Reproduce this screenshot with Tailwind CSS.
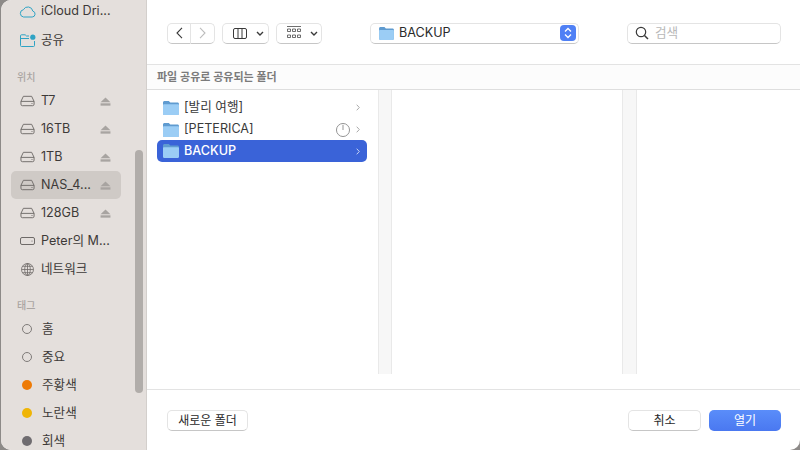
<!DOCTYPE html>
<html lang="ko">
<head>
  <meta charset="UTF-8">
  <title>Open panel</title>
  <script src="https://cdn.jsdelivr.net/npm/@tailwindcss/browser@4"></script>
</head>
<body class="w-[800px] h-[450px] overflow-hidden bg-[#8d8a88] font-['Inter','Liberation_Sans','Noto_Sans_CJK_KR',sans-serif] text-[12.6px] text-[#3d3a38]">
  <svg width="0" height="0" class="absolute">
    <defs>
      <symbol id="disk" viewBox="0 0 16 12"><path d="M3.6 1h8.8l2.6 5.4v3a1.600 1.600 0 0 1-1.600 1.600H2.600A1.600 1.600 0 0 1 1 9.400v-3z M1 6.400h14" fill="none" stroke="#6e6a68" stroke-width="1"/><circle cx="12.800" cy="8.700" r=".6" fill="#6e6a68"/></symbol>
      <symbol id="eject" viewBox="0 0 12 10"><path d="M6 .5 11.500 5.800H.5z" fill="#a8a4a1"/><rect x=".5" y="7" width="11" height="2.600" fill="#a8a4a1"/></symbol>
      <symbol id="folder" viewBox="0 0 16 14"><path d="M1.500 0h4.300l1.500 1.500h7.200c.8 0 1.500.7 1.500 1.500v9.500c0 .8-.7 1.500-1.500 1.500h-13C.7 14 0 13.300 0 12.500v-11C0 .7.7 0 1.500 0z" fill="#5f9bd0"/><path d="M1 3.300h14c.5 0 1 .4 1 1v8.200c0 .8-.7 1.500-1.500 1.500h-13C.7 14 0 13.300 0 12.500V4.300c0-.6.500-1 1-1z" fill="#9bcdf5"/></symbol>
    </defs>
  </svg>

  <div class="ml-[1px] w-[799px] h-[450px] flex bg-white rounded-tl-[10px] rounded-bl-[10px] rounded-br-[10px] overflow-hidden">
    <!-- Sidebar -->
    <aside class="relative w-[146px] shrink-0 h-full overflow-hidden bg-[#e4dfdc] border-r border-[#d3cfcc]">
      <div class="flex flex-col pl-[10px] w-[120px]">
        <div class="h-[28px] -mt-[3px] flex items-center pl-[8px] gap-[5px]">
          <svg class="w-[17px] h-[13px]" viewBox="0 0 17 13"><path d="M4.500 12h8.700a3 3 0 0 0 .6-5.900A5 5 0 0 0 4.400 4.700 3.700 3.700 0 0 0 4.500 12z" fill="none" stroke="#2fa3c4" stroke-width="1"/></svg>
          <span class="whitespace-nowrap">iCloud Dri...</span>
        </div>
        <div class="h-[28px] mt-[1px] flex items-center pl-[9px] gap-[5px]">
          <svg class="w-[16px] h-[13px]" viewBox="0 0 16 13"><path d="M9 2H6.500L5.200.8H1.500A1 1 0 0 0 .5 1.800v9.700a1 1 0 0 0 1 1h12a1 1 0 0 0 1-1V7M.5 4.500H9" fill="none" stroke="#2fa3c4" stroke-width="1"/><circle cx="12.800" cy="3.200" r="2.600" fill="#2fa3c4"/></svg>
          <span>공유</span>
        </div>
        <div class="h-[14px] mt-[16px] mb-[3px] pl-[6px] flex items-center text-[10px] font-medium text-[#aaa5a2]">위치</div>
        <div class="h-[28px] flex items-center pl-[9px]">
          <svg class="w-[15px] h-[12px] mr-[6px]"><use href="#disk"/></svg><span class="flex-1">T7</span><svg class="w-[11px] h-[9px] mr-[10px]"><use href="#eject"/></svg>
        </div>
        <div class="h-[28px] flex items-center pl-[9px]">
          <svg class="w-[15px] h-[12px] mr-[6px]"><use href="#disk"/></svg><span class="flex-1">16TB</span><svg class="w-[11px] h-[9px] mr-[10px]"><use href="#eject"/></svg>
        </div>
        <div class="h-[28px] flex items-center pl-[9px]">
          <svg class="w-[15px] h-[12px] mr-[6px]"><use href="#disk"/></svg><span class="flex-1">1TB</span><svg class="w-[11px] h-[9px] mr-[10px]"><use href="#eject"/></svg>
        </div>
        <div class="h-[28px] flex items-center pl-[9px] bg-[#cfcac6] rounded-[5px]">
          <svg class="w-[15px] h-[12px] mr-[6px]"><use href="#disk"/></svg><span class="flex-1">NAS_4...</span><svg class="w-[11px] h-[9px] mr-[10px]"><use href="#eject"/></svg>
        </div>
        <div class="h-[28px] flex items-center pl-[9px]">
          <svg class="w-[15px] h-[12px] mr-[6px]"><use href="#disk"/></svg><span class="flex-1">128GB</span><svg class="w-[11px] h-[9px] mr-[10px]"><use href="#eject"/></svg>
        </div>
        <div class="h-[28px] flex items-center pl-[9px]">
          <svg class="w-[15px] h-[8px] mr-[6px]" viewBox="0 0 15 8"><rect x=".5" y=".5" width="14" height="7" rx="1.500" fill="none" stroke="#6e6a68"/><circle cx="12" cy="4" r=".6" fill="#6e6a68"/></svg><span class="whitespace-nowrap">Peter의 M...</span>
        </div>
        <div class="h-[28px] flex items-center pl-[10px]">
          <svg class="w-[13px] h-[13px] mr-[7px]" viewBox="0 0 13 13"><g fill="none" stroke="#6e6a68" stroke-width=".8"><circle cx="6.500" cy="6.500" r="6"/><ellipse cx="6.500" cy="6.500" rx="2.800" ry="6"/><path d="M.5 6.500h12M1.500 3.300h10M1.500 9.700h10M6.500.5v12"/></g></svg><span>네트워크</span>
        </div>
        <div class="h-[14px] mt-[15px] mb-[3px] pl-[6px] flex items-center text-[10px] font-medium text-[#aaa5a2]">태그</div>
        <div class="h-[28px] flex items-center pl-[11px] gap-[10px]"><span class="w-[10px] h-[10px] rounded-full border border-[#7f7b79]"></span><span>홈</span></div>
        <div class="h-[28px] flex items-center pl-[11px] gap-[10px]"><span class="w-[10px] h-[10px] rounded-full border border-[#7f7b79]"></span><span>중요</span></div>
        <div class="h-[28px] flex items-center pl-[11px] gap-[10px]"><span class="w-[10px] h-[10px] rounded-full bg-[#ee7b06]"></span><span>주황색</span></div>
        <div class="h-[28px] flex items-center pl-[11px] gap-[10px]"><span class="w-[10px] h-[10px] rounded-full bg-[#efb506]"></span><span>노란색</span></div>
        <div class="h-[20px] flex items-center pl-[11px] gap-[10px] mt-[4px]"><span class="w-[10px] h-[10px] rounded-full bg-[#6f6c70]"></span><span>회색</span></div>
      </div>
      <!-- scrollbar thumb -->
      <div class="absolute left-[134px] top-[150px] w-[8px] h-[243px] rounded-full bg-[#b1adaa]"></div>
    </aside>

    <!-- Main -->
    <main class="flex-1 flex flex-col min-w-0">
      <!-- Toolbar -->
      <div class="h-[65px] shrink-0 flex items-center border-b border-[#e3e3e3] pl-[20px] pr-[19px] pt-[2px]">
        <div class="flex">
          <button class="w-[24px] h-[21px] flex items-center justify-center bg-white rounded-l-[5px] border border-[#e4e4e4] border-b-[#c6c6c6]">
            <svg class="w-[7px] h-[12px]" viewBox="0 0 7 12"><path d="M6 .8 1 6l5 5.200" fill="none" stroke="#3a3a3a" stroke-width="1.100"/></svg>
          </button>
          <button class="w-[24px] h-[21px] flex items-center justify-center bg-white rounded-r-[5px] border border-l-0 border-[#e4e4e4] border-b-[#c6c6c6]">
            <svg class="w-[7px] h-[12px]" viewBox="0 0 7 12"><path d="M1 .8 6 6l-5 5.200" fill="none" stroke="#bdbdbd" stroke-width="1.100"/></svg>
          </button>
        </div>
        <button class="ml-[7px] w-[47px] h-[21px] flex items-center pl-[10px] bg-white rounded-[5px] border border-[#e4e4e4] border-b-[#c6c6c6]">
          <svg class="w-[14px] h-[11px]" viewBox="0 0 14 11"><rect x=".5" y=".5" width="13" height="10" rx="1.500" fill="none" stroke="#3a3a3a"/><path d="M5 .5v10M9 .5v10" stroke="#3a3a3a"/></svg>
          <svg class="w-[8px] h-[5px] ml-[9px]" viewBox="0 0 8 5"><path d="M1 1l3 3 3-3" fill="none" stroke="#3a3a3a" stroke-width="1.400"/></svg>
        </button>
        <button class="ml-[7px] w-[46px] h-[21px] flex items-center pl-[10px] bg-white rounded-[5px] border border-[#e4e4e4] border-b-[#c6c6c6]">
          <svg class="w-[14px] h-[14px]" viewBox="0 0 14 14"><g fill="none" stroke="#4a4a4a" stroke-width=".8"><path d="M0 .5h14"/><path d="M.5 3h3v2.500h-3zM5.500 3h3v2.500h-3zM10.500 3h3v2.500h-3zM.5 9h3v2.500h-3zM5.500 9h3v2.500h-3zM10.500 9h3v2.500h-3z"/></g></svg>
          <svg class="w-[8px] h-[5px] ml-[9px]" viewBox="0 0 8 5"><path d="M1 1l3 3 3-3" fill="none" stroke="#3a3a3a" stroke-width="1.400"/></svg>
        </button>
        <button class="ml-[48px] w-[209px] h-[21px] flex items-center pl-[8px] pr-[2px] bg-white rounded-[5px] border border-[#e4e4e4] border-b-[#c6c6c6] text-[#2a2a2a]">
          <svg class="w-[15px] h-[13px] mr-[5px]"><use href="#folder"/></svg>
          <span class="flex-1 text-left">BACKUP</span>
          <span class="w-[16px] h-[16px] rounded-[4px] bg-[#4f80f5] flex items-center justify-center">
            <svg class="w-[8px] h-[12px]" viewBox="0 0 8 12"><path d="M1 4.500 4 1.500l3 3M1 7.500l3 3 3-3" fill="none" stroke="#fff" stroke-width="1.300"/></svg>
          </span>
        </button>
        <div class="ml-auto w-[154px] h-[21px] flex items-center pl-[7px] gap-[6px] bg-white rounded-[5px] border border-[#e4e4e4] border-b-[#c6c6c6] text-[#b9b9b9]">
          <svg class="w-[14px] h-[14px]" viewBox="0 0 14 14"><circle cx="6" cy="6" r="4.700" fill="none" stroke="#3a3a3a" stroke-width="1.200"/><path d="M9.500 9.500 13 13" stroke="#3a3a3a" stroke-width="1.500"/></svg>
          <span>검색</span>
        </div>
      </div>

      <!-- Location header -->
      <div class="h-[25px] shrink-0 flex items-center pl-[10px] bg-[#fcfcfc] border-b border-[#dedede] text-[11px] font-semibold text-[#7b7b7b]">파일 공유로 공유되는 폴더</div>

      <!-- Columns -->
      <div class="h-[284px] shrink-0 flex">
        <div class="w-[231px] shrink-0 pl-[10px] pr-[11px] pt-[7px] flex flex-col gap-[1px] text-[#3a3a3a]">
          <div class="h-[21px] flex items-center pl-[6px] pr-[7px]">
            <svg class="w-[16px] h-[14px] mr-[5px]"><use href="#folder"/></svg><span class="flex-1">[발리 여행]</span>
            <svg class="w-[4px] h-[7px]" viewBox="0 0 4 7"><path d="M.7.7 3.300 3.500.7 6.300" fill="none" stroke="#a9a9a9"/></svg>
          </div>
          <div class="h-[21px] flex items-center pl-[6px] pr-[7px]">
            <svg class="w-[16px] h-[14px] mr-[5px]"><use href="#folder"/></svg><span class="flex-1">[PETERICA]</span>
            <svg class="w-[14px] h-[14px] mr-[6px]" viewBox="0 0 15 15"><circle cx="7.500" cy="7.500" r="7" fill="none" stroke="#8d8d8d"/><path d="M7.500 2v5.500" stroke="#8d8d8d"/></svg>
            <svg class="w-[4px] h-[7px]" viewBox="0 0 4 7"><path d="M.7.7 3.300 3.500.7 6.300" fill="none" stroke="#a9a9a9"/></svg>
          </div>
          <div class="h-[22px] -mt-[1px] flex items-center pl-[6px] pr-[7px] rounded-[5px] bg-[#3a63d8] text-white font-medium">
            <svg class="w-[16px] h-[14px] mr-[5px]"><use href="#folder"/></svg><span class="flex-1">BACKUP</span>
            <svg class="w-[4px] h-[7px]" viewBox="0 0 4 7"><path d="M.7.7 3.300 3.500.7 6.300" fill="none" stroke="#c8d4f5"/></svg>
          </div>
        </div>
        <div class="w-[14px] shrink-0 bg-[#f7f7f7] border-x border-[#e9e9e9]"></div>
        <div class="w-[230px] shrink-0"></div>
        <div class="w-[15px] shrink-0 bg-[#f7f7f7] border-x border-[#e9e9e9]"></div>
        <div class="flex-1"></div>
      </div>

      <!-- Footer -->
      <div class="h-[15px] shrink-0"></div>
      <div class="flex-1 border-t border-[#e3e3e3] flex items-start pt-[20px] pl-[20px] pr-[19px]">
        <button class="w-[81px] h-[21px] bg-white rounded-[5px] border border-[#e4e4e4] border-b-[#c6c6c6] text-[#2a2a2a] text-[12px]">새로운 폴더</button>
        <button class="ml-auto w-[73px] h-[21px] bg-white rounded-[5px] border border-[#e4e4e4] border-b-[#c6c6c6] text-[#2a2a2a] text-[12px]">취소</button>
        <button class="ml-[8px] w-[72px] h-[21px] rounded-[5px] bg-gradient-to-b from-[#5a8dfa] to-[#4a78f0] text-white text-[12px]">열기</button>
      </div>
    </main>
  </div>
</body>
</html>
